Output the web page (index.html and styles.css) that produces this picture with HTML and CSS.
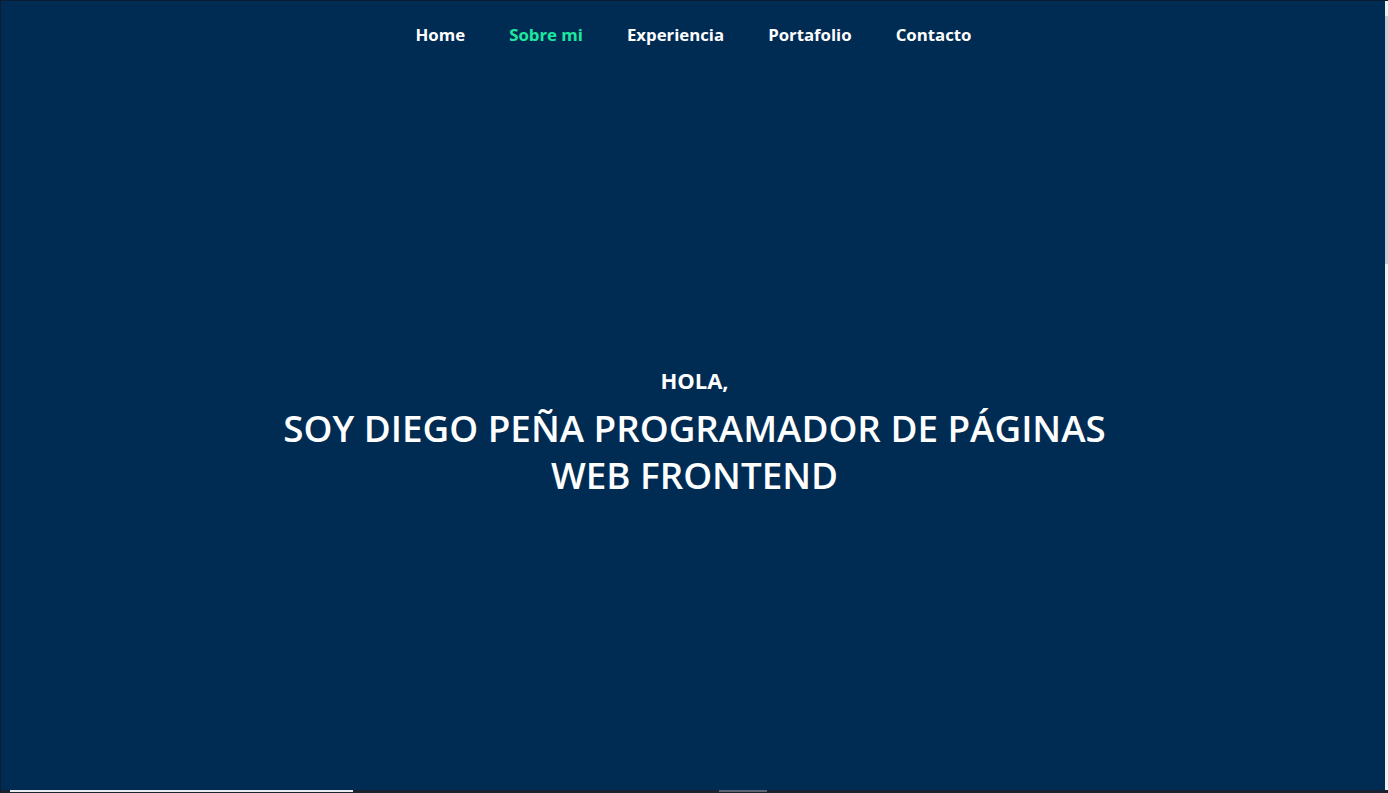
FILE: index.html
```html
<!DOCTYPE html>
<html lang="es">
<head>
<meta charset="utf-8">
<title>Diego Peña</title>
<link rel="stylesheet" href="styles.css">
</head>
<body>
<div class="page">
  <nav class="nav">
    <a class="nav-link" href="#">Home</a>
    <a class="nav-link active" href="#">Sobre mi</a>
    <a class="nav-link" href="#">Experiencia</a>
    <a class="nav-link" href="#">Portafolio</a>
    <a class="nav-link" href="#">Contacto</a>
  </nav>
  <section class="hero">
    <p class="hello">HOLA,</p>
    <h1 class="title">SOY DIEGO PEÑA PROGRAMADOR DE PÁGINAS WEB FRONTEND</h1>
  </section>
  <div class="vscroll"><div class="vthumb"></div></div>
  <div class="hscroll"><div class="hbar"></div><div class="hthumb"></div></div>
</div>
</body>
</html>
```
FILE: styles.css
```css
* { box-sizing: border-box; }
html, body { margin: 0; padding: 0; height: 100%; }
body {
  background: #002c54;
  font-family: "Open Sans", "Noto Sans", sans-serif;
  color: #fff;
  overflow: hidden;
}
.page {
  position: relative;
  height: 793px;
  display: flex;
  flex-direction: column;
  border-left: 1px solid #0b1d33;
  border-top: 1px solid #0b1d33;
}
.nav {
  display: flex;
  justify-content: center;
  gap: 44px;
  padding-top: 22px;
  padding-right: 2px;
  height: 70px;
}
.nav-link {
  color: #fff;
  text-decoration: none;
  font-weight: 700;
  font-size: 16.8px;
  line-height: 24px;
}
.nav-link.active { color: #1ee8a0; }
.hero {
  flex: 1;
  display: flex;
  flex-direction: column;
  align-items: center;
  justify-content: center;
  text-align: center;
}
.hello {
  margin: 0 0 11px;
  font-size: 22px;
  font-weight: 700;
  line-height: 28px;
}
.title {
  margin: 0;
  width: 880px;
  font-size: 36.8px;
  font-weight: 600;
  line-height: 47px;
}
.vscroll {
  position: absolute;
  right: 0;
  top: 0;
  width: 3px;
  height: 100%;
  background: #eef0f3;
}
.vthumb {
  margin-top: 15px;
  height: 248px;
  background: #c9ccd1;
}
.hscroll {
  position: absolute;
  left: 0;
  bottom: 0;
  width: 100%;
  height: 3px;
  background: #1a2230;
}
.hbar {
  position: absolute;
  left: 9px;
  top: 0;
  width: 343px;
  height: 2px;
  background: #e8ecf0;
}
.hthumb {
  position: absolute;
  left: 718px;
  top: 0;
  width: 48px;
  height: 2px;
  background: #5b6470;
}
```
